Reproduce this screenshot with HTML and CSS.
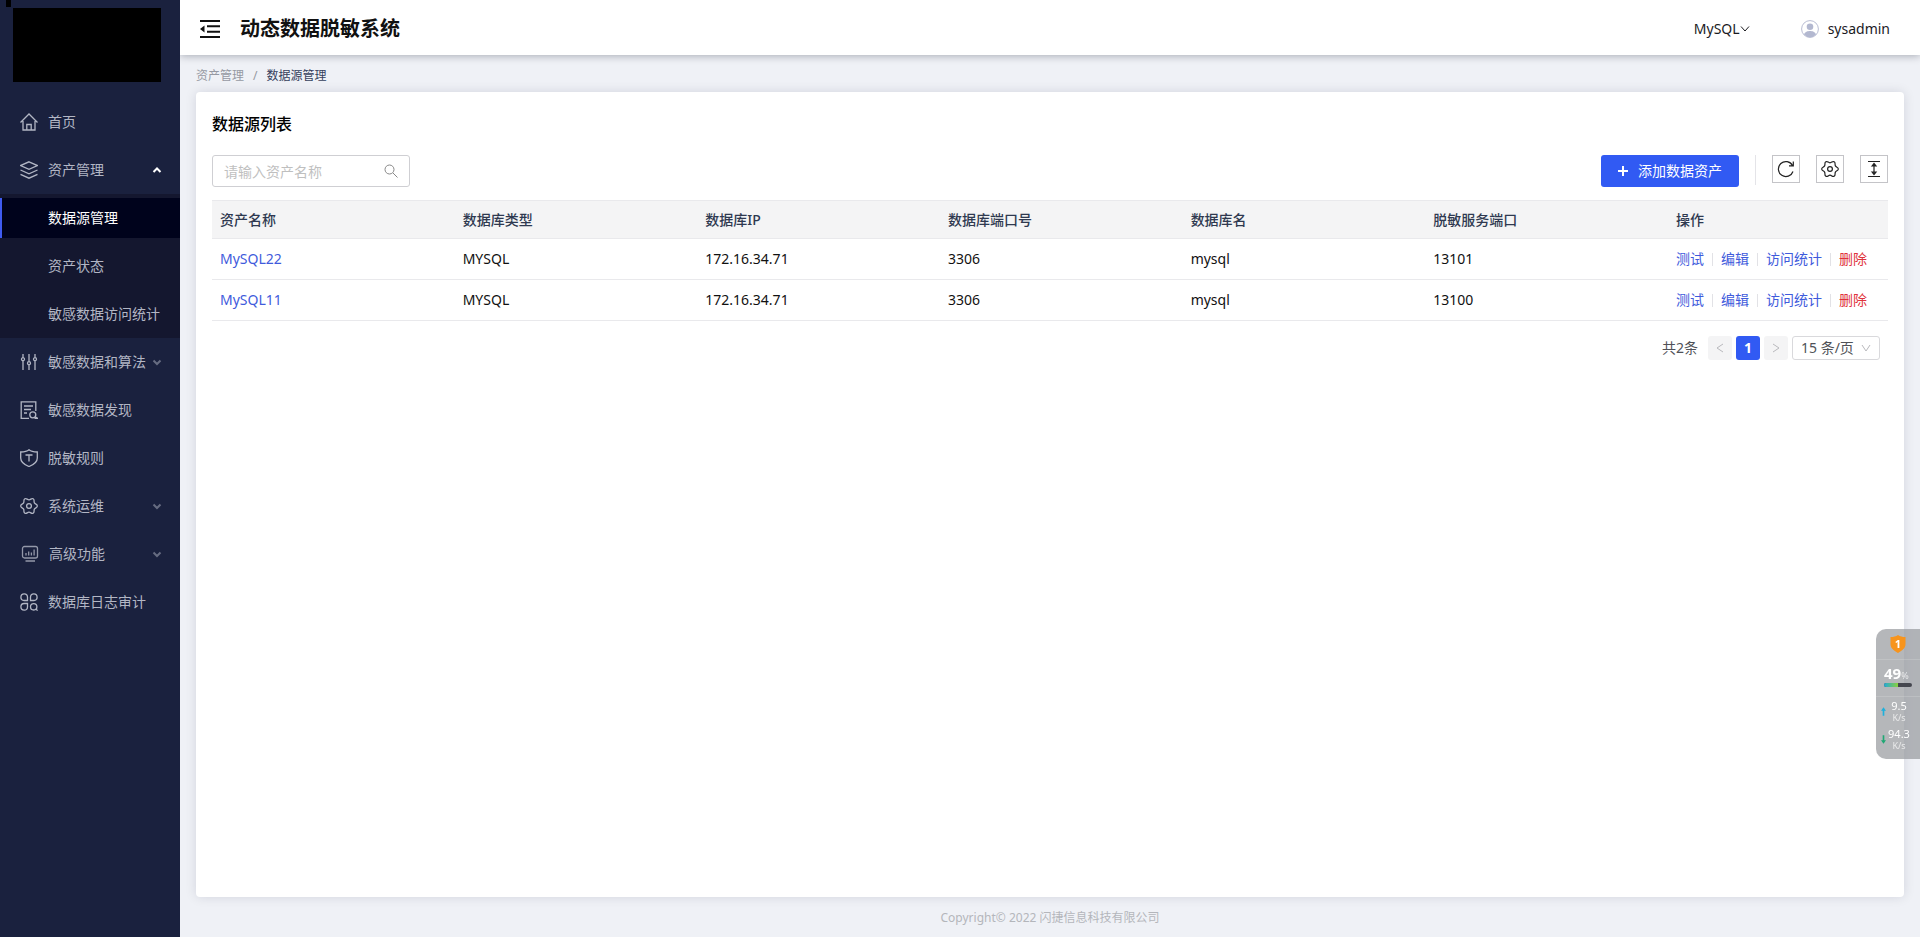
FILE: index.html
```html
<!DOCTYPE html>
<html lang="zh-CN">
<head>
<meta charset="utf-8">
<title>动态数据脱敏系统</title>
<link rel="stylesheet" href="styles.css">
</head>
<body>
<div class="app">
  <aside class="sidebar">
    <div class="logo-notch"></div>
    <div class="logo"></div>
    <nav class="menu">
      <a class="menu-item" href="#">
        <svg class="menu-icon" viewBox="0 0 18 18"><path d="M.5 9.500 9 1l8.500 8.500M3 8v9h12V8M6.800 17v-5.500h4.400V17"/></svg>
        <span>首页</span>
      </a>
      <a class="menu-item" href="#">
        <svg class="menu-icon" viewBox="0 0 18 18"><path d="M9 .8 17.500 4.600 9 8.400.5 4.600zM.5 9 9 12.800 17.500 9M.5 13.300 9 17.200l8.500-3.900"/></svg>
        <span>资产管理</span>
        <svg class="arrow arrow-open" viewBox="0 0 10 8"><path d="M1.500 6 5 2.500 8.500 6"/></svg>
      </a>
      <div class="submenu">
        <a class="menu-item active" href="#">数据源管理</a>
        <a class="menu-item" href="#">资产状态</a>
        <a class="menu-item" href="#">敏感数据访问统计</a>
      </div>
      <a class="menu-item" href="#">
        <svg class="menu-icon" viewBox="0 0 18 18"><path d="M3 1v3.500M3 8v9M9 1v7.500M9 12v5M15 1v3.500M15 8v9"/><circle cx="3" cy="6.200" r="1.500"/><circle cx="9" cy="10.200" r="1.500"/><circle cx="15" cy="6.200" r="1.500"/></svg>
        <span>敏感数据和算法</span>
        <svg class="arrow" viewBox="0 0 10 8"><path d="M1.500 2.500 5 6l3.500-3.500"/></svg>
      </a>
      <a class="menu-item" href="#">
        <svg class="menu-icon" viewBox="0 0 18 18"><path d="M9 17.300H1.200V.8h14.600V10M4 5h9M4 8.500h7M4 12h3M15 15.800l2.500 1.500h-3"/><circle cx="12.800" cy="13.800" r="3"/></svg>
        <span>敏感数据发现</span>
      </a>
      <a class="menu-item" href="#">
        <svg class="menu-icon" viewBox="0 0 18 18"><path d="M9 .8C11 2.500 13.500 3 17.300 3v6c0 4-3.800 6.800-8.300 8.500C4.500 15.800.7 13 .7 9V3C4.500 3 7 2.500 9 .8zM5.500 6h7M9 6v6.500"/></svg>
        <span>脱敏规则</span>
      </a>
      <a class="menu-item" href="#">
        <svg class="menu-icon" viewBox="0 0 18 18"><path d="M9 2.800C10.800 2.800 11.400.8 13.150 1.800 14.900 2.800 13.500 4.300 14.400 5.900 15.300 7.500 17.300 7 17.300 9 17.300 11 15.300 10.500 14.400 12.100 13.500 13.700 14.900 15.200 13.150 16.200 11.400 17.200 10.800 15.200 9 15.200 7.200 15.200 6.600 17.200 4.850 16.200 3.100 15.200 4.500 13.700 3.600 12.100 2.700 10.500.7 11 .7 9 .7 7 2.700 7.500 3.600 5.900 4.500 4.300 3.100 2.800 4.850 1.800 6.600.8 7.200 2.800 9 2.800z"/><circle cx="9" cy="9" r="2.400"/></svg>
        <span>系统运维</span>
        <svg class="arrow" viewBox="0 0 10 8"><path d="M1.500 2.500 5 6l3.500-3.500"/></svg>
      </a>
      <a class="menu-item menu-item-dim" href="#">
        <svg class="menu-icon" viewBox="0 0 18 18"><rect x="1.500" y="1.500" width="15" height="11.500" rx="2"/><path d="M5 10.500V8M7.700 10.500V6.500M10.400 10.500V7.500M13.100 10.500V4.500M4.500 16h9.500"/></svg>
        <span>高级功能</span>
        <svg class="arrow" viewBox="0 0 10 8"><path d="M1.500 2.500 5 6l3.500-3.500"/></svg>
      </a>
      <a class="menu-item" href="#">
        <svg class="menu-icon" viewBox="0 0 18 18"><path d="M7.500 7.500H4.100A3.300 3.300 0 1 1 7.500 4.100zM10.500 7.500V4.100a3.300 3.300 0 1 1 3.400 3.400zM7.500 10.500v3.400a3.300 3.300 0 1 1-3.400-3.400zM15.500 16l2.200 1.500"/><circle cx="13.700" cy="13.800" r="3.200"/></svg>
        <span>数据库日志审计</span>
      </a>
    </nav>
  </aside>

  <div class="content">
    <header class="header">
      <button class="fold" type="button" aria-label="收起菜单">
        <svg viewBox="0 0 20 18"><path class="stroke" d="M0 1h20M7 6.300h13M7 11.700h13M0 17h20"/><path d="M4.500 5.500v7L0 9z"/></svg>
      </button>
      <h1 class="system-name">动态数据脱敏系统</h1>
      <button class="db-switch" type="button">MySQL<svg viewBox="0 0 10 8"><path d="M1 1.500 5 6l4-4.500"/></svg></button>
      <button class="user" type="button">
        <svg viewBox="0 0 18 18"><circle cx="9" cy="9" r="8.400" fill="#fff" stroke="#b9bdd3"/><circle cx="9" cy="6.800" r="3.300"/><path d="M3 14.500c1-3 3.500-3.600 6-3.600s5 .6 6 3.600a8 8 0 0 1-12 0z"/></svg>
        <span>sysadmin</span>
      </button>
    </header>

    <nav class="breadcrumb" aria-label="路径">
      <a href="#">资产管理</a><span class="slash">/</span><span class="here">数据源管理</span>
    </nav>

    <main class="card">
      <h2 class="card-title">数据源列表</h2>
      <div class="toolbar">
        <div class="search">
          <input type="text" placeholder="请输入资产名称" aria-label="资产名称">
          <svg viewBox="0 0 14 14"><circle cx="5.500" cy="5.500" r="4.500"/><path d="m9 9 4.500 4.500"/></svg>
        </div>
        <div class="tools">
          <button class="add" type="button"><svg viewBox="0 0 10 10"><path d="M5 0v10M0 5h10"/></svg>添加数据资产</button>
          <span class="tool-divider"></span>
          <button class="tool" type="button" aria-label="刷新"><svg viewBox="0 0 18 18"><path d="M15.500 5.500A7.500 7.500 0 1 0 16 11.500M16.300 1.500v4.300H12"/></svg></button>
          <button class="tool" type="button" aria-label="设置"><svg viewBox="0 0 18 18"><path d="M9 2.800C10.800 2.800 11.400.8 13.150 1.800 14.900 2.800 13.500 4.300 14.400 5.900 15.300 7.500 17.300 7 17.300 9 17.300 11 15.300 10.500 14.400 12.100 13.500 13.700 14.900 15.200 13.150 16.200 11.400 17.200 10.800 15.200 9 15.200 7.200 15.200 6.600 17.200 4.850 16.200 3.100 15.200 4.500 13.700 3.600 12.100 2.700 10.500.7 11 .7 9 .7 7 2.700 7.500 3.600 5.900 4.500 4.300 3.100 2.800 4.850 1.800 6.600.8 7.200 2.800 9 2.800z"/><circle cx="9" cy="9" r="2.400"/></svg></button>
          <button class="tool" type="button" aria-label="行高"><svg viewBox="0 0 18 18"><path d="M3 1.500h12M3 16.500h12M9 4v10M7 6l2-2.500L11 6zM7 12l2 2.500 2-2.500z"/></svg></button>
        </div>
      </div>

      <table class="grid">
        <thead>
          <tr><th>资产名称</th><th>数据库类型</th><th>数据库IP</th><th>数据库端口号</th><th>数据库名</th><th>脱敏服务端口</th><th class="ops-col">操作</th></tr>
        </thead>
        <tbody>
          <tr>
            <td><a href="#">MySQL22</a></td><td>MYSQL</td><td>172.16.34.71</td><td>3306</td><td>mysql</td><td>13101</td>
            <td><div class="ops"><a href="#">测试</a><a href="#">编辑</a><a href="#">访问统计</a><a class="danger" href="#">删除</a></div></td>
          </tr>
          <tr>
            <td><a href="#">MySQL11</a></td><td>MYSQL</td><td>172.16.34.71</td><td>3306</td><td>mysql</td><td>13100</td>
            <td><div class="ops"><a href="#">测试</a><a href="#">编辑</a><a href="#">访问统计</a><a class="danger" href="#">删除</a></div></td>
          </tr>
        </tbody>
      </table>

      <div class="pager">
        <span class="total">共2条</span>
        <button class="page" type="button" disabled aria-label="上一页"><svg viewBox="0 0 10 10"><path d="M8 1 2 5l6 4"/></svg></button>
        <button class="page current" type="button">1</button>
        <button class="page" type="button" disabled aria-label="下一页"><svg viewBox="0 0 10 10"><path d="m2 1 6 4-6 4"/></svg></button>
        <div class="page-size">
          <select aria-label="每页条数"><option>15 条/页</option></select>
          <svg viewBox="0 0 10 8"><path d="m1 1 4 6 4-6"/></svg>
        </div>
      </div>
    </main>

    <footer class="footer">Copyright© 2022 闪捷信息科技有限公司</footer>
  </div>
</div>

<div class="monitor">
  <div class="monitor-shield">
    <svg viewBox="0 0 16 18"><path d="M8 0c2 1.500 4.500 2 7.500 2v7c0 4-3 6.500-7.500 9C3.500 15.500.5 13 .5 9V2C3.500 2 6 1.500 8 0z"/></svg>
    <span>1</span>
  </div>
  <div class="monitor-load">
    <div><b>49</b><small>%</small></div>
    <div class="bar"><i></i></div>
  </div>
  <div class="net">
    <svg class="up" viewBox="0 0 6 10"><path d="M3 0 0 4h2v6h2V4h2z"/></svg>
    <div>9.5<small>K/s</small></div>
  </div>
  <div class="net">
    <svg class="down" viewBox="0 0 6 10"><path d="M3 10 0 6h2V0h2v6h2z"/></svg>
    <div>94.3<small>K/s</small></div>
  </div>
</div>
</body>
</html>
```
FILE: styles.css
```css
* { box-sizing: border-box; }

body {
  margin: 0;
  font: 14px/20px "Noto Sans", "Noto Sans CJK SC", sans-serif;
  color: #1b1b1f;
  background: #eff1f6;
}

a { color: #3f5bdc; text-decoration: none; }
button, input, select { font: inherit; color: inherit; margin: 0; }
button { padding: 0; border: 0; background: none; }
h1, h2 { margin: 0; }
svg { display: block; flex: none; fill: none; stroke: currentColor; }

.app { display: flex; min-height: 100vh; }

/* sidebar */
.sidebar {
  position: relative;
  flex: none;
  width: 180px;
  padding-top: 8px;
  background: #1a213e;
}
.logo { width: 148px; height: 74px; margin-left: 13px; background: #000; }
.logo-notch { position: absolute; top: 0; left: 6px; width: 5px; height: 7px; background: #000; }
.menu { display: flex; flex-direction: column; gap: 8px; margin-top: 20px; }
.menu-item {
  display: flex;
  align-items: center;
  height: 40px;
  padding: 0 18px 0 20px;
  color: #b2b6c4;
  white-space: nowrap;
}
.menu-icon { width: 18px; height: 18px; margin-right: 10px; stroke-width: 1.3; }
.menu-item-dim { padding-left: 21px; }
.menu-item-dim .menu-icon { opacity: .8; }
.arrow { width: 10px; height: 8px; margin-left: auto; stroke-width: 2; opacity: .5; }
.arrow-open { color: #fff; opacity: 1; }
.submenu {
  display: flex;
  flex-direction: column;
  gap: 8px;
  margin: -4px 0;
  padding: 4px 0;
  background: #14172f;
}
.submenu .menu-item { padding-left: 48px; }
.submenu .active { color: #fff; background: #00031c; box-shadow: inset 2px 0 #3f5bf0; }

/* main column */
.content { flex: 1; display: flex; flex-direction: column; min-width: 0; }
.header {
  display: flex;
  align-items: center;
  height: 55px;
  padding: 2px 30px 0 20px;
  background: #fff;
  box-shadow: 0 1px 8px rgba(0, 10, 30, .3);
}
.fold svg { width: 20px; height: 18px; fill: #111; stroke: none; }
.fold .stroke { stroke: #111; stroke-width: 2; }
.system-name { margin-left: 20px; font-size: 20px; line-height: 28px; font-weight: 700; color: #111; }
.db-switch { display: flex; align-items: center; margin-left: auto; }
.db-switch svg { width: 10px; height: 8px; }
.user { display: flex; align-items: center; gap: 9px; margin-left: 51px; }
.user svg { width: 18px; height: 18px; fill: #b3b8d0; stroke: none; }

.breadcrumb { display: flex; gap: 9px; padding: 11px 16px 6px; font-size: 12px; line-height: 20px; }
.breadcrumb a, .slash { color: #9699a2; }
.here { color: #35405c; }

.card {
  flex: 1;
  margin: 0 16px;
  padding: 20px 16px;
  background: #fff;
  border-radius: 4px;
  box-shadow: 0 0 12px rgba(10, 20, 50, .12);
}
.card-title { font-size: 16px; line-height: 24px; font-weight: 500; color: #000; }

.toolbar { display: flex; justify-content: space-between; margin: 19px 0 13px; }
.search { position: relative; width: 198px; }
.search input {
  width: 100%;
  height: 32px;
  padding: 0 36px 0 11px;
  border: 1px solid #cfcfd3;
  border-radius: 3px;
  background: #fff;
}
.search input::placeholder { color: #bfbfbf; opacity: 1; }
.search svg { position: absolute; top: 9px; right: 12px; width: 14px; height: 14px; color: #888; }
.tools { display: flex; align-items: flex-start; }
.add {
  display: flex;
  align-items: center;
  justify-content: center;
  gap: 10px;
  width: 138px;
  height: 32px;
  border-radius: 3px;
  color: #fff;
  background: #315af3;
}
.add svg { width: 10px; height: 10px; stroke-width: 2; }
.tool-divider { width: 1px; height: 30px; margin-left: 16px; background: #e4e4e8; }
.tool {
  display: grid;
  place-items: center;
  width: 28px;
  height: 28px;
  margin-left: 16px;
  border: 1px solid #c4c4c8;
  color: #222;
}
.tool svg { width: 18px; height: 18px; stroke-width: 1.2; }

/* table */
.grid { width: 100%; table-layout: fixed; border-collapse: collapse; }
.grid th, .grid td { padding: 0 8px; border-bottom: 1px solid #e9e9ec; text-align: left; white-space: nowrap; }
.grid th { height: 38px; font-weight: 500; color: #2f3950; background: #f4f4f5; border-top: 1px solid #e9e9ec; }
.grid td { height: 41px; color: #111; }
.grid td a { color: #3f5bdc; }
.grid .ops-col { width: 220px; }
.ops { display: flex; }
.ops a + a { display: flex; align-items: center; }
.ops a + a::before { content: ""; width: 1px; height: 13px; margin: 0 8px; background: #e2e2e6; }
.grid .ops .danger { color: #e0323c; }

.pager { display: flex; align-items: center; justify-content: flex-end; gap: 4px; margin: 15px 8px 0 0; color: #505258; }
.total { margin-right: 6px; }
.page {
  display: grid;
  place-items: center;
  width: 24px;
  height: 24px;
  border-radius: 3px;
  color: #b9b9bd;
  background: #f4f4f5;
}
.page svg { width: 10px; height: 10px; }
.page.current { color: #fff; font-weight: 700; background: #315af3; }
.page-size { position: relative; width: 88px; }
.page-size select {
  width: 100%;
  height: 24px;
  padding: 0 8px;
  appearance: none;
  border: 1px solid #d9d9dc;
  border-radius: 3px;
  background: #fff;
}
.page-size svg { position: absolute; top: 8px; right: 9px; width: 10px; height: 8px; color: #b9b9bd; pointer-events: none; }

.footer { padding: 11px 0 9px; font-size: 12px; line-height: 20px; text-align: center; color: #b4b6bb; }

/* floating system monitor */
.monitor {
  position: fixed;
  top: 629px;
  right: 0;
  width: 44px;
  height: 130px;
  padding-top: 6px;
  border-radius: 10px 0 0 10px;
  color: #fff;
  font-size: 11px;
  line-height: 12px;
  background: rgba(150, 152, 156, .7);
}
.monitor small { font-size: 9px; opacity: .7; }
.monitor-shield { display: grid; justify-items: center; padding-bottom: 6px; border-bottom: 1px solid rgba(255, 255, 255, .15); }
.monitor-shield svg, .monitor-shield span { grid-area: 1 / 1; }
.monitor-shield svg { width: 16px; height: 18px; fill: #f7941d; stroke: none; }
.monitor-shield span { font-weight: 700; line-height: 18px; }
.monitor-load { padding: 5px 8px 9px; border-bottom: 1px solid rgba(255, 255, 255, .15); white-space: nowrap; }
.monitor-load b { font-size: 15px; line-height: 16px; }
.bar { height: 4px; margin-top: 1px; border-radius: 2px; background: #44464e; }
.bar i { display: block; width: 49%; height: 100%; border-radius: 2px 0 0 2px; background: linear-gradient(90deg, #25a9d8, #8ad03c); }
.net { display: grid; grid-template-columns: 5px 1fr; align-items: center; height: 28px; padding: 0 8px 0 5px; text-align: center; }
.net svg { width: 5px; height: 9px; stroke: none; }
.net small { display: block; line-height: 11px; }
.up { fill: #1fb0dc; }
.down { fill: #1fa874; }
```
